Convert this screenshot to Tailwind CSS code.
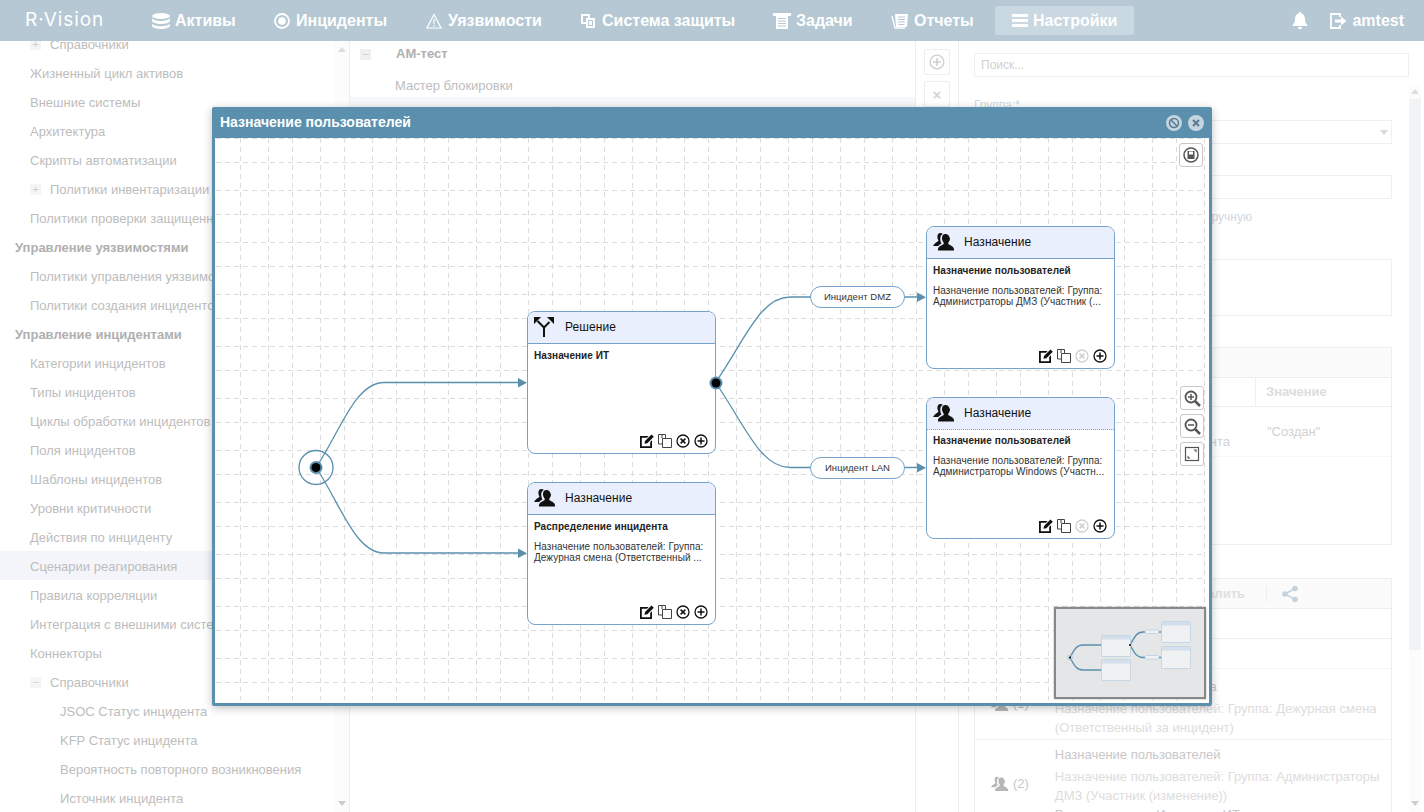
<!DOCTYPE html>
<html lang="ru">
<head>
<meta charset="utf-8">
<title>R-Vision</title>
<script src="https://cdn.jsdelivr.net/npm/@tailwindcss/browser@4"></script>
</head>
<body class="w-[1424px] h-[812px] overflow-hidden bg-white font-['Liberation_Sans',Arial,sans-serif] relative">
<svg class="hidden" xmlns="http://www.w3.org/2000/svg">
  <symbol id="i-edit" viewBox="0 0 14 14"><path d="M0 2h8.500L7 3.800H1.800v8.400h8.400V8L12 6.200V14H0z" fill="#111"/><path d="M4.500 9.800 5 7 11.500.5l2.300 2.300-6.500 6.500z" fill="#111"/></symbol>
  <symbol id="i-copy" viewBox="0 0 14 14"><path d="M4 4V.5H.5v9.500H4M4 .5h3.500V4M4.500 4.500h9V13.500h-9z" fill="none" stroke="#444" stroke-width="1"/></symbol>
  <symbol id="i-x" viewBox="0 0 14 14"><circle cx="7" cy="7" r="6" fill="none" stroke="currentColor" stroke-width="1.300"/><path d="M4.600 4.600l4.800 4.800M9.400 4.600 4.600 9.400" stroke="currentColor" stroke-width="1.500"/></symbol>
  <symbol id="i-plus" viewBox="0 0 14 14"><circle cx="7" cy="7" r="6" fill="none" stroke="#111" stroke-width="1.300"/><path d="M7 3.500v7M3.500 7h7" stroke="#111" stroke-width="1.500"/></symbol>
  <symbol id="i-users" viewBox="0 0 22 18"><path d="M7.500 0C5.200 0 4.200 2 4.400 4.300c.1 1.400.7 2.600 1.200 3.300C4.200 9.200 1.200 10.500 0 13h5.200C6.200 11.700 7.400 11 8.400 10.500 7.400 8.500 7 6.500 7.400 4.200 7.700 2.700 8.500 1.700 9.800 1.100 9.300.4 8.500 0 7.500 0z" fill="#111"/><path d="M12.500 1C10 1 8.800 3 9 5.500c.1 1.500.8 3.200 1.700 4.300.2.800 0 1.300-.7 1.800-1.500 1-4 1.300-5 4.400v1.500h16V16c-1-3.100-3.500-3.400-5-4.400-.7-.5-.9-1-.7-1.800.9-1.100 1.600-2.800 1.700-4.300C16.200 3 15 1 12.500 1z" fill="#111"/></symbol>
  <symbol id="i-split" viewBox="0 0 20 20"><path d="M10 20v-9.500L3.500 4M10 10.500 15.500 5" fill="none" stroke="#111" stroke-width="2"/><path d="M0 0h7L0 7zM20 0h-7l7 7z" fill="#111"/></symbol>
</svg>

<header class="h-[41px] bg-[#b5c8d4] flex items-center text-white font-bold text-[16px] relative">
  <div class="w-[152px] pl-[25px] font-['Inter',sans-serif] font-normal text-[19px] tracking-[0.9px]">R·Vision</div>
  <div class="w-[122px] flex items-center gap-[5px]">
    <svg width="18" height="16" viewBox="0 0 18 16" fill="#fff"><ellipse cx="9" cy="3" rx="9" ry="3"/><path d="M0 5c1 2 5 3 9 3s8-1 9-3v3c-1 2-5 3-9 3S1 10 0 8zM0 10.500c1 2 5 2.700 9 2.700s8-.7 9-2.700V13c-1 2-5 3-9 3s-8-1-9-3z"/></svg>
    <span>Активы</span>
  </div>
  <div class="w-[152px] flex items-center gap-[6px]">
    <svg width="16" height="16" viewBox="0 0 16 16"><circle cx="8" cy="8" r="7" fill="none" stroke="#fff" stroke-width="1.800"/><circle cx="8" cy="8" r="3.800" fill="#fff"/></svg>
    <span>Инциденты</span>
  </div>
  <div class="w-[154px] flex items-center gap-[6px]">
    <svg width="16" height="16" viewBox="0 0 16 16"><path d="M8 1.500 15 15H1z" fill="none" stroke="#fff" stroke-width="1.200"/><path d="M7.300 6h1.400l-.2 5h-1zM7.300 12h1.400v1.500H7.300z" fill="#fff"/></svg>
    <span>Уязвимости</span>
  </div>
  <div class="w-[193px] flex items-center gap-[6px]">
    <svg width="16" height="16" viewBox="0 0 16 16"><path d="M1 1h9v4h5v10H6v-4H1z" fill="#fff"/><path d="M3 3h5v2H6v4H3zM8 7h5v6H8z" fill="#b5c8d4"/><path d="M9 8h3v4H9z" fill="#fff"/></svg>
    <span>Система защиты</span>
  </div>
  <div class="w-[118px] flex items-center gap-[5px]">
    <svg width="18" height="17" viewBox="0 0 18 17" fill="#fff"><path d="M0 1h18v3h-3v13H3V4H0z"/><path d="M5 6h8v1H5zM5 8.500h8v1H5zM5 11h8v1H5zM5 13.500h8v1H5z" fill="#b5c8d4"/></svg>
    <span>Задачи</span>
  </div>
  <div class="w-[104px] flex items-center gap-[6px]">
    <svg width="17" height="16" viewBox="0 0 17 16"><path d="M1 3 4 15h10" fill="none" stroke="#fff" stroke-width="1.300"/><path d="M4 1h13l-1 13H5z" fill="#fff"/><path d="M7 4h7M7 6.500h7M7.200 9h6.500M7.400 11.500h6" stroke="#b5c8d4"/></svg>
    <span>Отчеты</span>
  </div>
  <div class="w-[139px] h-[29px] rounded-[2px] bg-[#c9d8e1] flex items-center gap-[5px] pl-[17px]">
    <svg width="16" height="13" viewBox="0 0 16 13" fill="#fff"><path d="M0 0h16v3H0zM0 5h16v3H0zM0 10h16v3H0z"/></svg>
    <span>Настройки</span>
  </div>
  <div class="ml-auto flex items-center pr-[20px]">
    <svg width="16" height="18" viewBox="0 0 16 18" fill="#fff"><path d="M8 0c1 0 1.500.6 1.500 1.500C12 2.300 13 4.500 13 7c0 3.500 1 5 3 7H0c2-2 3-3.500 3-7 0-2.500 1-4.700 3.500-5.500C6.500.6 7 0 8 0zM6 15h4c0 1.500-1 2.500-2 2.500S6 16.500 6 15z"/></svg>
    <svg class="ml-[22px]" width="17" height="16" viewBox="0 0 17 16"><path d="M10 4V1H1v14h9v-3" fill="none" stroke="#fff" stroke-width="1.800"/><path d="M5 6.500h6V3.500l5.500 4.500L11 12.500v-3H5z" fill="#fff"/></svg>
    <span class="ml-[5px]">amtest</span>
  </div>
</header>

<main class="flex h-[771px] overflow-hidden text-[#bdbdbd] text-[13px]">
  <aside class="w-[350px] shrink-0 border-r border-[#eeeeee] relative overflow-hidden">
    <div class="absolute right-0 top-0 bottom-0 w-[15px] bg-[#fcfcfc]">
      <div class="absolute left-[4px] top-[6px] w-0 h-0 border-x-[4px] border-x-transparent border-b-[5px] border-b-[#dddddd]"></div>
      <div class="absolute left-[4px] bottom-[6px] w-0 h-0 border-x-[4px] border-x-transparent border-t-[5px] border-t-[#cccccc]"></div>
    </div>
    <ul class="mt-[-12px]">
      <li class="h-[29px] pl-[30px] flex items-center pt-[2px]"><span class="w-[11px] h-[11px] bg-[#f5f5f5] text-[#cfcfcf] text-[11px] leading-[10px] text-center mr-[9px]">+</span>Справочники</li>
      <li class="h-[29px] pl-[30px] flex items-center pt-[2px]">Жизненный цикл активов</li>
      <li class="h-[29px] pl-[30px] flex items-center pt-[2px]">Внешние системы</li>
      <li class="h-[29px] pl-[30px] flex items-center pt-[2px]">Архитектура</li>
      <li class="h-[29px] pl-[30px] flex items-center pt-[2px]">Скрипты автоматизации</li>
      <li class="h-[29px] pl-[30px] flex items-center pt-[2px]"><span class="w-[11px] h-[11px] bg-[#f5f5f5] text-[#cfcfcf] text-[11px] leading-[10px] text-center mr-[9px]">+</span>Политики инвентаризации</li>
      <li class="h-[29px] pl-[30px] flex items-center pt-[2px] whitespace-nowrap">Политики проверки защищенности</li>
      <li class="h-[29px] pl-[15px] flex items-center pt-[2px] font-bold text-[#b0b0b0]">Управление уязвимостями</li>
      <li class="h-[29px] pl-[30px] flex items-center pt-[2px] whitespace-nowrap">Политики управления уязвимостями</li>
      <li class="h-[29px] pl-[30px] flex items-center pt-[2px] whitespace-nowrap">Политики создания инцидентов</li>
      <li class="h-[29px] pl-[15px] flex items-center pt-[2px] font-bold text-[#b0b0b0]">Управление инцидентами</li>
      <li class="h-[29px] pl-[30px] flex items-center pt-[2px]">Категории инцидентов</li>
      <li class="h-[29px] pl-[30px] flex items-center pt-[2px]">Типы инцидентов</li>
      <li class="h-[29px] pl-[30px] flex items-center pt-[2px] whitespace-nowrap">Циклы обработки инцидентов</li>
      <li class="h-[29px] pl-[30px] flex items-center pt-[2px]">Поля инцидентов</li>
      <li class="h-[29px] pl-[30px] flex items-center pt-[2px]">Шаблоны инцидентов</li>
      <li class="h-[29px] pl-[30px] flex items-center pt-[2px]">Уровни критичности</li>
      <li class="h-[29px] pl-[30px] flex items-center pt-[2px]">Действия по инциденту</li>
      <li class="h-[29px] pl-[30px] flex items-center pt-[2px] bg-[#f3f5fb]">Сценарии реагирования</li>
      <li class="h-[29px] pl-[30px] flex items-center pt-[2px]">Правила корреляции</li>
      <li class="h-[29px] pl-[30px] flex items-center pt-[2px] whitespace-nowrap">Интеграция с внешними системами</li>
      <li class="h-[29px] pl-[30px] flex items-center pt-[2px]">Коннекторы</li>
      <li class="h-[29px] pl-[30px] flex items-center pt-[2px]"><span class="w-[11px] h-[11px] bg-[#f5f5f5] text-[#cfcfcf] text-[11px] leading-[9px] text-center mr-[9px]">–</span>Справочники</li>
      <li class="h-[29px] pl-[60px] flex items-center pt-[2px]">JSOC Статус инцидента</li>
      <li class="h-[29px] pl-[60px] flex items-center pt-[2px]">KFP Статус инцидента</li>
      <li class="h-[29px] pl-[60px] flex items-center pt-[2px]">Вероятность повторного возникновения</li>
      <li class="h-[29px] pl-[60px] flex items-center pt-[2px]">Источник инцидента</li>
    </ul>
  </aside>

  <section class="w-[566px] shrink-0 border-r border-[#eeeeee]">
    <div class="h-[26px] flex items-center pl-[10px]">
      <span class="w-[11px] h-[11px] bg-[#f0f0f0] text-[#cfcfcf] text-[11px] leading-[9px] text-center mr-[25px]">–</span><b class="text-[#b0b0b0] font-bold">АМ-тест</b>
    </div>
    <div class="h-[30px] flex items-center pl-[45px] pt-[8px]">Мастер блокировки</div>
    <div class="h-[30px] flex items-center pl-[45px] bg-[#f5f7fb]">Назначение пользователей</div>
  </section>

  <div class="w-[43px] shrink-0 border-r border-[#eeeeee] flex flex-col items-center pt-[8px] gap-[6px] text-[#d5d5d5]">
    <div class="w-[26px] h-[26px] border border-[#eeeeee] rounded-[2px] flex items-center justify-center"><svg width="16" height="16" viewBox="0 0 14 14"><circle cx="7" cy="7" r="6" fill="none" stroke="#d0d0d0" stroke-width="1.200"/><path d="M7 3.500v7M3.500 7h7" stroke="#d0d0d0" stroke-width="1.400"/></svg></div>
    <div class="w-[26px] h-[26px] border border-[#eeeeee] rounded-[2px] flex items-center justify-center text-[15px] font-bold leading-none">×</div>
  </div>

  <section class="flex-1 relative pl-[15px]">
    <div class="mt-[12px] w-[435px] h-[24px] border border-[#f0f0f0] flex items-center pl-[6px] text-[#d0d0d0] text-[12px]">Поиск...</div>
    <div class="absolute right-[3px] top-[44px] bottom-0 w-[12px] bg-[#fcfcfc]">
      <div class="absolute left-[2px] top-[4px] w-0 h-0 border-x-[4px] border-x-transparent border-b-[5px] border-b-[#dddddd]"></div>
      <div class="absolute left-0 top-[14px] w-[12px] h-[551px] bg-[#f2f3f5]"></div>
      <div class="absolute left-[2px] bottom-[6px] w-0 h-0 border-x-[4px] border-x-transparent border-t-[5px] border-t-[#cccccc]"></div>
    </div>
    <div class="w-[418px]">
      <div class="mt-[21px] h-[14px] text-[12px] text-[#cfd8e2] leading-[14px]">Группа:*</div>
      <div class="mt-[8px] h-[24px] border border-[#f0f0f0] relative"><span class="absolute right-[3px] top-[9px] w-0 h-0 border-x-[4px] border-x-transparent border-t-[5px] border-t-[#d8d8d8]"></span></div>
      <div class="mt-[31px] h-[24px] border border-[#f0f0f0]"></div>
      <div class="mt-[10px] h-[16px] flex justify-end pr-[140px] text-[12px] text-[#cfd8e2] leading-[16px]">Назначение вручную</div>
      <div class="mt-[34px] h-[57px] border border-[#f0f0f0]"></div>
      <div class="mt-[31px] h-[198px] border border-[#eeeeee]">
        <div class="h-[30px] bg-[#fbfbfb] border-b border-[#eeeeee]"></div>
        <div class="h-[29px] flex border-b border-[#eeeeee] font-bold text-[#dddddd] text-[13px]">
          <div class="w-[281px] border-r border-[#eeeeee]"></div>
          <div class="pl-[10px] flex items-center">Значение</div>
        </div>
        <div class="h-[50px] flex border-b border-dotted border-[#eeeeee] text-[#d2d2d2] text-[13px]">
          <div class="w-[281px] flex justify-end pt-[27px] pr-[26px] leading-[15px]">инцидента</div>
          <div class="pl-[11px] pt-[17px] leading-[15px]">"Создан"</div>
        </div>
      </div>
      <div class="mt-[33px] border border-b-0 border-[#eeeeee]">
        <div class="h-[30px] bg-[#fbfbfb] border-b border-[#eeeeee] flex items-center text-[13px] font-bold text-[#e0e0e0]">
          <div class="w-[270px] text-right">Удалить</div>
          <div class="ml-[21px] w-px h-[16px] bg-[#eeeeee]"></div>
          <svg class="ml-[14px]" width="18" height="18" viewBox="0 0 18 18"><path d="M14 3.500 4 9l10 5.500" fill="none" stroke="#c5d3dc" stroke-width="1.500"/><circle cx="14" cy="3.500" r="2.800" fill="#c5d3dc"/><circle cx="4" cy="9" r="2.800" fill="#c5d3dc"/><circle cx="14" cy="14.500" r="2.800" fill="#c5d3dc"/></svg>
        </div>
        <div class="h-[30px] border-b border-[#eeeeee]"></div>
        <div class="h-[30px] border-b border-dotted border-[#eeeeee]"></div>
        <div class="h-[71px] flex border-b border-[#f2f2f2] text-[13px]">
          <div class="w-[79px] flex items-center justify-end gap-[4px] pr-[25px] text-[#c8c8c8]">
            <svg class="opacity-30 shrink-0" width="18" height="16"><use href="#i-users"/></svg>(1)
          </div>
          <div class="pl-[1px] pt-[8px] leading-[19px] w-[338px]">
            <div class="text-[#c8c8c8] mb-[3px]">Распределение инцидента</div>
            <div class="text-[#dddddd]">Назначение пользователей: Группа: Дежурная смена (Ответственный за инцидент)</div>
          </div>
        </div>
        <div class="flex text-[13px]">
          <div class="w-[79px] flex items-center justify-end gap-[4px] pr-[25px] text-[#c8c8c8] h-[88px]">
            <svg class="opacity-30 shrink-0" width="18" height="16"><use href="#i-users"/></svg>(2)
          </div>
          <div class="pl-[1px] pt-[5px] leading-[19px] w-[338px]">
            <div class="text-[#c8c8c8] mb-[3px]">Назначение пользователей</div>
            <div class="text-[#dddddd]">Назначение пользователей: Группа: Администраторы ДМЗ (Участник (изменение))</div>
            <div class="text-[#c8c8c8]">Распределение: Инцидент: ИТ</div>
          </div>
        </div>
      </div>
    </div>
  </section>
</main>

<!-- Modal -->
<div class="absolute left-[212px] top-[107px] w-[1000px] h-[599px] bg-[#5a90ae] rounded-[2px] shadow-[0_2px_8px_rgba(0,0,0,0.25)] px-[3px] pb-[3px] flex flex-col">
  <div class="h-[31px] shrink-0 flex items-center pl-[5px] pr-[5px] text-white font-bold text-[14px] relative">
    <span>Назначение пользователей</span>
    <div class="ml-auto flex gap-[6px]">
      <svg width="16" height="16" viewBox="0 0 16 16"><circle cx="8" cy="8" r="8" fill="#c4d5e0"/><circle cx="8" cy="8" r="4.500" fill="none" stroke="#5a7a90" stroke-width="1.500"/><path d="M5 5l6 6" stroke="#5a7a90" stroke-width="1.500"/></svg>
      <svg width="16" height="16" viewBox="0 0 16 16"><circle cx="8" cy="8" r="8" fill="#c4d5e0"/><path d="M5 5l6 6M11 5l-6 6" stroke="#5a7a90" stroke-width="2"/></svg>
    </div>
  </div>
  <div class="relative flex-1 bg-white overflow-hidden text-[10px] tracking-[0.06px] text-[#222]">
    <svg class="absolute inset-0" width="994" height="565" viewBox="215 138 994 565">
      <path fill="none" stroke="#dcdcdc" stroke-dasharray="5 4" d="M240.500 138V700M268.500 138V700M292.500 138V700M320.500 138V700M344.500 138V700M372.500 138V700M396.500 138V700M424.500 138V700M448.500 138V700M476.500 138V700M500.500 138V700M528.500 138V700M552.500 138V700M580.500 138V700M604.500 138V700M632.500 138V700M656.500 138V700M684.500 138V700M708.500 138V700M736.500 138V700M760.500 138V700M788.500 138V700M812.500 138V700M840.500 138V700M864.500 138V700M892.500 138V700M916.500 138V700M944.500 138V700M968.500 138V700M996.500 138V700M1020.500 138V700M1048.500 138V700M1072.500 138V700M1100.500 138V700M1124.500 138V700M1152.500 138V700M1176.500 138V700M1204.500 138V700M216 138.500H1206M216 162.500H1206M216 190.500H1206M216 214.500H1206M216 242.500H1206M216 266.500H1206M216 294.500H1206M216 318.500H1206M216 346.500H1206M216 370.500H1206M216 398.500H1206M216 422.500H1206M216 450.500H1206M216 474.500H1206M216 502.500H1206M216 526.500H1206M216 554.500H1206M216 578.500H1206M216 606.500H1206M216 630.500H1206M216 658.500H1206M216 682.500H1206"/>
      <g fill="none" stroke="#5a90ae" stroke-width="1.300">
        <path d="M316 467.500C340 432 355 382.500 384 382.500H520"/>
        <path d="M316 467.500C340 503 355 553 384 553H520"/>
        <path d="M715.500 382.500C745 340 760 297 790 297H812"/>
        <path d="M715.500 382.500C745 425 760 467.500 790 467.500H812"/>
        <path d="M904 297H919" stroke-width="1.500"/>
        <path d="M904 467.500H919" stroke-width="1.500"/>
        <circle cx="316" cy="467.500" r="17" stroke-width="1.300"/>
      </g>
      <g fill="#5a90ae">
        <path d="M518 378v9.500l9-4.750zM518 548.500v9.500l9-4.750zM917 292.500v9.500l9-4.750zM917 463v9.500l9-4.750z"/>
        <circle cx="316" cy="467.500" r="6.500"/>
      </g>
      <circle cx="316" cy="467.500" r="4.500" fill="#000"/>
    </svg>

    <!-- nodes -->
    <div class="absolute left-[312px] top-[173px] w-[189px] h-[143px] bg-white border border-[#76a3cb] rounded-[8px] flex flex-col overflow-hidden">
      <div class="h-[32px] shrink-0 bg-[#e9effc] border-b border-[#76a3cb] flex items-center pl-[6px] pb-[2px] text-[12px] text-[#111]"><svg width="20" height="20"><use href="#i-split"/></svg><span class="ml-[11px]">Решение</span></div>
      <div class="px-[6px] pt-[6px] font-bold text-[#222] leading-[12px]">Назначение ИТ</div>
      <div class="mt-auto pb-[5px] pr-[7px] flex justify-end gap-[4px] text-[#111]"><svg width="14" height="14"><use href="#i-edit"/></svg><svg width="14" height="14"><use href="#i-copy"/></svg><svg width="14" height="14"><use href="#i-x"/></svg><svg width="14" height="14"><use href="#i-plus"/></svg></div>
    </div>
    <div class="absolute left-[312px] top-[344px] w-[189px] h-[143px] bg-white border border-[#76a3cb] rounded-[8px] flex flex-col overflow-hidden">
      <div class="h-[32px] shrink-0 bg-[#e9effc] border-b border-[#76a3cb] flex items-center pl-[6px] pb-[2px] text-[12px] text-[#111]"><svg width="22" height="18"><use href="#i-users"/></svg><span class="ml-[9px]">Назначение</span></div>
      <div class="px-[6px] pt-[6px] font-bold text-[#222] leading-[12px]">Распределение инцидента</div>
      <div class="px-[6px] pt-[8px] leading-[11px] text-[#333] whitespace-nowrap">Назначение пользователей: Группа:<br>Дежурная смена (Ответственный ...</div>
      <div class="mt-auto pb-[5px] pr-[7px] flex justify-end gap-[4px] text-[#111]"><svg width="14" height="14"><use href="#i-edit"/></svg><svg width="14" height="14"><use href="#i-copy"/></svg><svg width="14" height="14"><use href="#i-x"/></svg><svg width="14" height="14"><use href="#i-plus"/></svg></div>
    </div>
    <div class="absolute left-[711px] top-[88px] w-[189px] h-[143px] bg-white border border-[#76a3cb] rounded-[8px] flex flex-col overflow-hidden">
      <div class="h-[32px] shrink-0 bg-[#e9effc] border-b border-[#76a3cb] flex items-center pl-[6px] pb-[2px] text-[12px] text-[#111]"><svg width="22" height="18"><use href="#i-users"/></svg><span class="ml-[9px]">Назначение</span></div>
      <div class="px-[6px] pt-[6px] font-bold text-[#222] leading-[12px]">Назначение пользователей</div>
      <div class="px-[6px] pt-[8px] leading-[11px] text-[#333] whitespace-nowrap">Назначение пользователей: Группа:<br>Администраторы ДМЗ (Участник (...</div>
      <div class="mt-auto pb-[5px] pr-[7px] flex justify-end gap-[4px] text-[#d0d0d0]"><svg width="14" height="14"><use href="#i-edit"/></svg><svg width="14" height="14"><use href="#i-copy"/></svg><svg width="14" height="14"><use href="#i-x"/></svg><svg width="14" height="14"><use href="#i-plus"/></svg></div>
    </div>
    <div class="absolute left-[711px] top-[259px] w-[189px] h-[142px] bg-white border border-[#76a3cb] rounded-[8px] flex flex-col overflow-hidden">
      <div class="h-[32px] shrink-0 bg-[#e9effc] border-b border-dotted border-[#76a3cb] flex items-center pl-[6px] pb-[2px] text-[12px] text-[#111]"><svg width="22" height="18"><use href="#i-users"/></svg><span class="ml-[9px]">Назначение</span></div>
      <div class="px-[6px] pt-[5px] font-bold text-[#222] leading-[12px]">Назначение пользователей</div>
      <div class="px-[6px] pt-[8px] leading-[11px] text-[#333] whitespace-nowrap">Назначение пользователей: Группа:<br>Администраторы Windows (Участн...</div>
      <div class="mt-auto pb-[5px] pr-[7px] flex justify-end gap-[4px] text-[#d0d0d0]"><svg width="14" height="14"><use href="#i-edit"/></svg><svg width="14" height="14"><use href="#i-copy"/></svg><svg width="14" height="14"><use href="#i-x"/></svg><svg width="14" height="14"><use href="#i-plus"/></svg></div>
    </div>

    <!-- output port, drawn over the node -->
    <svg class="absolute left-[491px] top-[235px]" width="20" height="20" viewBox="0 0 20 20"><circle cx="10" cy="10" r="6.500" fill="#5a90ae"/><circle cx="10" cy="10" r="4.500" fill="#000"/></svg>

    <!-- edge labels -->
    <div class="absolute left-[595px] top-[148px] w-[95px] h-[22px] rounded-full border border-[#76a3cb] bg-white flex items-center justify-center text-[9.5px] text-[#333]">Инцидент DMZ</div>
    <div class="absolute left-[595px] top-[319px] w-[95px] h-[22px] rounded-full border border-[#76a3cb] bg-white flex items-center justify-center text-[9.5px] text-[#333]">Инцидент LAN</div>

    <!-- canvas toolbar -->
    <div class="absolute left-[964px] top-[5px] w-[24px] h-[24px] bg-white border border-[#c8c8c8] rounded-[3px] flex items-center justify-center">
      <svg width="16" height="16" viewBox="0 0 16 16"><circle cx="8" cy="8" r="7" fill="none" stroke="#555" stroke-width="1.500"/><path d="M4.500 4h7v8h-7z" fill="#555"/><path d="M6 4.500h4v3H6z" fill="#fff"/></svg>
    </div>
    <div class="absolute left-[965px] top-[248px] flex flex-col gap-[4px]">
      <div class="w-[24px] h-[24px] bg-white border border-[#c8c8c8] rounded-[3px] flex items-center justify-center"><svg width="17" height="17" viewBox="0 0 17 17"><circle cx="7" cy="7" r="5.500" fill="none" stroke="#555" stroke-width="1.800"/><path d="M4 7h6M7 4v6" stroke="#555" stroke-width="1.500"/><path d="M11 11l5 5" stroke="#555" stroke-width="2.500"/></svg></div>
      <div class="w-[24px] h-[24px] bg-white border border-[#c8c8c8] rounded-[3px] flex items-center justify-center"><svg width="17" height="17" viewBox="0 0 17 17"><circle cx="7" cy="7" r="5.500" fill="none" stroke="#555" stroke-width="1.800"/><path d="M4 7h6" stroke="#555" stroke-width="1.500"/><path d="M11 11l5 5" stroke="#555" stroke-width="2.500"/></svg></div>
      <div class="w-[24px] h-[24px] bg-white border border-[#c8c8c8] rounded-[3px] flex items-center justify-center"><svg width="16" height="16" viewBox="0 0 16 16"><rect x="1.500" y="1.500" width="13" height="13" fill="none" stroke="#555" stroke-width="1.200"/><path d="M9.500 3.500h3v3zM3.500 9.500v3h3z" fill="#555"/></svg></div>
    </div>

    <!-- minimap -->
    <svg class="absolute left-[839px] top-[469px] shadow-[0_0_2px_rgba(0,0,0,0.3)]" width="152" height="92" viewBox="1054 607 152 92">
      <rect x="1055" y="608" width="150" height="90" fill="#e4e6e8" stroke="#888" stroke-width="2"/>
      <g fill="none" stroke="#5a90ae" stroke-width="1.400">
        <path d="M1070 657.500C1075 648 1077 645 1083 645H1102"/>
        <path d="M1070 657.500C1075 667 1077 670 1083 670H1102"/>
        <path d="M1130 645C1135 636 1137 632 1143 632H1162"/>
        <path d="M1130 645C1135 654 1137 657.500 1143 657.500H1162"/>
        <circle cx="1070" cy="657.500" r="2.500" stroke="#a9c3d5" stroke-width="0.800"/>
      </g>
      <g fill="#eff1f3" stroke="#bcd0e0" stroke-width="0.800">
        <rect x="1101.500" y="635.500" width="29" height="21" rx="1"/>
        <rect x="1101.500" y="659.500" width="29" height="21" rx="1"/>
        <rect x="1161.500" y="621.500" width="29" height="21" rx="1"/>
        <rect x="1161.500" y="646.500" width="29" height="22" rx="1"/>
        <rect x="1145" y="630" width="14" height="3.500" rx="1.700"/>
        <rect x="1145" y="655.500" width="14" height="3.500" rx="1.700"/>
      </g>
      <g fill="#d3dfea"><rect x="1102" y="636" width="28" height="3.500"/><rect x="1102" y="660" width="28" height="3.500"/><rect x="1162" y="622" width="28" height="3.500"/><rect x="1162" y="647" width="28" height="3.500"/></g>
      <circle cx="1070" cy="657.500" r="1" fill="#000"/><circle cx="1130" cy="645" r="1" fill="#000"/>
    </svg>
  </div>
</div>
</body>
</html>
